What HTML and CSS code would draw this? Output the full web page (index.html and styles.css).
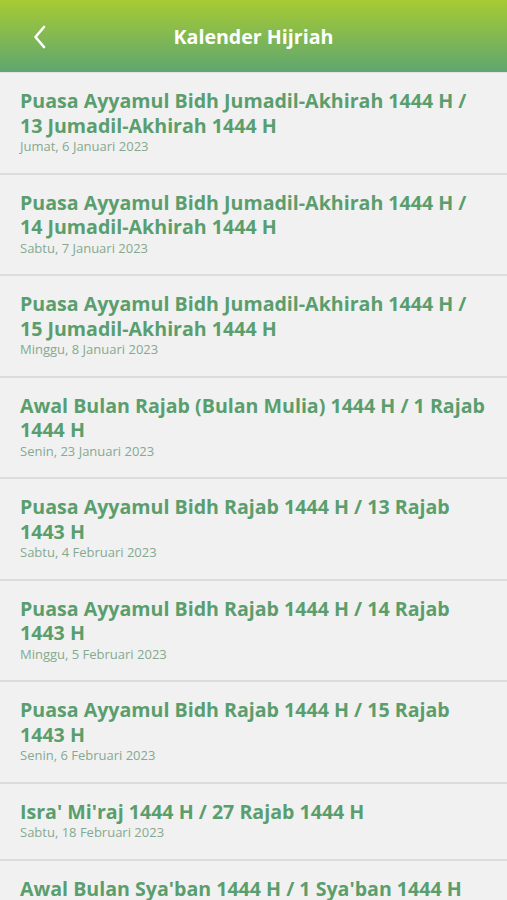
FILE: index.html
```html
<!DOCTYPE html>
<html lang="id">
<head>
  <meta charset="UTF-8" />
  <meta name="viewport" content="width=device-width, initial-scale=1.0" />
  <title>Kalender Hijriah</title>
  <link rel="stylesheet" href="styles.css">
</head>
<body>

<!-- Header -->
<header class="top-bar">
  <button class="back-btn" aria-label="Kembali">
    <svg width="14" height="24" viewBox="0 0 14 24">
      <path d="M11 2 L2.5 12 L11 22" fill="none" stroke="#ffffff" stroke-width="2.6" stroke-linecap="round" stroke-linejoin="round"/>
    </svg>
  </button>
  <h1 class="top-title">Kalender Hijriah</h1>
</header>

<!-- Event list -->
<ul class="event-list">
  <li class="event-item">
    <div class="event-title">Puasa Ayyamul Bidh Jumadil-Akhirah 1444 H / 13 Jumadil-Akhirah 1444 H</div>
    <div class="event-date">Jumat, 6 Januari 2023</div>
  </li>
  <li class="event-item">
    <div class="event-title">Puasa Ayyamul Bidh Jumadil-Akhirah 1444 H / 14 Jumadil-Akhirah 1444 H</div>
    <div class="event-date">Sabtu, 7 Januari 2023</div>
  </li>
  <li class="event-item">
    <div class="event-title">Puasa Ayyamul Bidh Jumadil-Akhirah 1444 H / 15 Jumadil-Akhirah 1444 H</div>
    <div class="event-date">Minggu, 8 Januari 2023</div>
  </li>
  <li class="event-item">
    <div class="event-title">Awal Bulan Rajab (Bulan Mulia) 1444 H / 1 Rajab 1444 H</div>
    <div class="event-date">Senin, 23 Januari 2023</div>
  </li>
  <li class="event-item">
    <div class="event-title">Puasa Ayyamul Bidh Rajab 1444 H / 13 Rajab 1443 H</div>
    <div class="event-date">Sabtu, 4 Februari 2023</div>
  </li>
  <li class="event-item">
    <div class="event-title">Puasa Ayyamul Bidh Rajab 1444 H / 14 Rajab 1443 H</div>
    <div class="event-date">Minggu, 5 Februari 2023</div>
  </li>
  <li class="event-item">
    <div class="event-title">Puasa Ayyamul Bidh Rajab 1444 H / 15 Rajab 1443 H</div>
    <div class="event-date">Senin, 6 Februari 2023</div>
  </li>
  <li class="event-item">
    <div class="event-title">Isra' Mi'raj 1444 H / 27 Rajab 1444 H</div>
    <div class="event-date">Sabtu, 18 Februari 2023</div>
  </li>
  <li class="event-item">
    <div class="event-title">Awal Bulan Sya'ban 1444 H / 1 Sya'ban 1444 H</div>
    <div class="event-date">Selasa, 21 Februari 2023</div>
  </li>
</ul>

</body>
</html>
```

FILE: styles.css
```css
/* General */
body {
  font-family: "Open Sans", sans-serif;
  background-color: #f1f1f1;
  margin: 0;
  overflow: hidden;
}

/* Header */
.top-bar {
  height: 72px;
  background: linear-gradient(to bottom, #a7cb32, #5fa671);
  display: flex;
  align-items: center;
  justify-content: center;
  position: relative;
  border-bottom: 1px solid #e2e2e2;
}

.back-btn {
  position: absolute;
  left: 33px;
  top: 25px;
  padding: 0;
  border: none;
  background: none;
  line-height: 0;
}

.top-title {
  margin: 0;
  color: #ffffff;
  font-size: 19.6px;
  font-weight: bold;
}

/* List */
.event-list {
  list-style: none;
  margin: 0;
  padding: 0;
}

.event-item {
  padding: 16px 20px 17.5px;
  border-bottom: 2px solid #dcdcdc;
}

.event-title {
  color: #5a9e6e;
  font-size: 19.6px;
  font-weight: bold;
  line-height: 24.5px;
}

.event-date {
  color: #85a98f;
  font-size: 13px;
  line-height: 17px;
}
```
